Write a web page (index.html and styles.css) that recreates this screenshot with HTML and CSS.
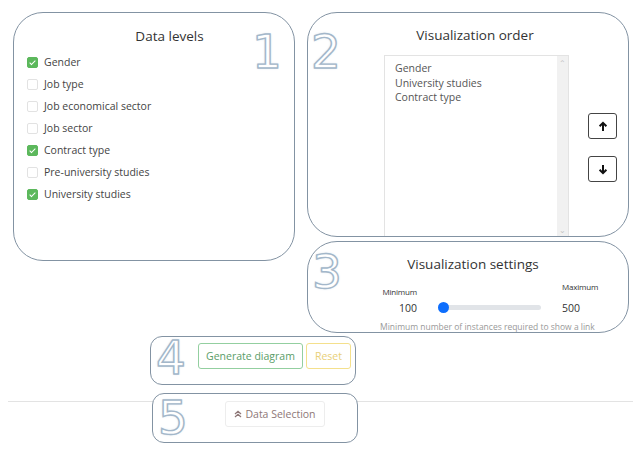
FILE: index.html
```html
<!DOCTYPE html>
<html lang="en">
<head>
    <meta charset="UTF-8">
    <meta name="viewport" content="width=device-width, initial-scale=1.0">
    <title>Data Selection</title>
    <link rel="stylesheet" href="styles.css">
</head>
<body>
    <div class="page">
        <div class="top-row">
            <div class="panel levels">
                <span class="step step-1">1</span>
                <h3 class="panel-title">Data levels</h3>
                <ul class="level-list">
                    <li><span class="check on"></span>Gender</li>
                    <li><span class="check"></span>Job type</li>
                    <li><span class="check"></span>Job economical sector</li>
                    <li><span class="check"></span>Job sector</li>
                    <li><span class="check on"></span>Contract type</li>
                    <li><span class="check"></span>Pre-university studies</li>
                    <li><span class="check on"></span>University studies</li>
                </ul>
            </div>

            <div class="right-col">
                <div class="panel order">
                    <span class="step step-2">2</span>
                    <h3 class="panel-title">Visualization order</h3>
                    <div class="order-body">
                        <div class="listbox">
                            <div class="list-items">
                                <div>Gender</div>
                                <div>University studies</div>
                                <div>Contract type</div>
                            </div>
                            <div class="scroll">
                                <span class="scroll-arrow">&#8963;</span>
                                <span class="scroll-arrow down">&#8964;</span>
                            </div>
                        </div>
                        <div class="move-buttons">
                            <button class="move-btn" title="Up">
                                <svg width="10" height="11" viewBox="0 0 10 11"><path d="M5 10V2M1.6 5.2L5 1.8 8.4 5.2" fill="none" stroke="#111" stroke-width="2"/></svg>
                            </button>
                            <button class="move-btn" title="Down">
                                <svg width="10" height="11" viewBox="0 0 10 11"><path d="M5 1v8M1.6 5.8L5 9.2 8.4 5.8" fill="none" stroke="#111" stroke-width="2"/></svg>
                            </button>
                        </div>
                    </div>
                </div>

                <div class="panel settings">
                    <span class="step step-3">3</span>
                    <h3 class="panel-title">Visualization settings</h3>
                    <div class="range-row">
                        <div class="range-min">
                            <div class="range-label">Minimum</div>
                            <div class="range-value">100</div>
                        </div>
                        <div class="slider">
                            <span class="thumb"></span>
                        </div>
                        <div class="range-max">
                            <div class="range-label">Maximum</div>
                            <div class="range-value">500</div>
                        </div>
                    </div>
                    <p class="hint">Minimum number of instances required to show a link</p>
                </div>
            </div>
        </div>

        <div class="panel actions">
            <span class="step step-4">4</span>
            <button class="btn btn-green">Generate diagram</button>
            <button class="btn btn-yellow">Reset</button>
        </div>

        <hr class="divider">

        <div class="panel selection">
            <span class="step step-5">5</span>
            <button class="btn btn-light">
                <svg width="8" height="8" viewBox="0 0 8 8"><path d="M1 4L4 1.3 7 4M1 7L4 4.3 7 7" fill="none" stroke="#8e7777" stroke-width="1.3"/></svg>
                Data Selection
            </button>
        </div>
    </div>
</body>
</html>
```

FILE: styles.css
```css
* {
    margin: 0;
    padding: 0;
    box-sizing: border-box;
}

body {
    font-family: 'Open Sans', 'Noto Sans', sans-serif;
    background: white;
    color: #444;
}

.page {
    padding: 12px 0 0 13px;
}

.top-row {
    display: flex;
    gap: 12px;
    align-items: flex-start;
}

.panel {
    position: relative;
    background: white;
    border: 1px solid #8393a3;
    border-radius: 30px;
}

.panel-title {
    font-size: 13.5px;
    font-weight: 400;
    line-height: 18px;
    color: #333;
    text-align: center;
}

/* outlined step numbers */
.step {
    position: absolute;
    font-family: 'DejaVu Sans', sans-serif;
    font-size: 47px;
    line-height: 1;
    color: white;
    -webkit-text-stroke: 1.4px #a3b7ca;
    text-shadow: 0 0 1px #8fa5ba, 0 0 3px #d3dee8;
}

.step-1 { top: 15px; right: 12px; }
.step-2 { top: 15px; left: 3px; }
.step-3 { top: 6px; left: 4px; }
.step-4 { top: -3px; left: 5px; }
.step-5 { top: 0; left: 5px; }

/* panel 1 */
.levels {
    width: 282px;
    height: 249px;
    padding: 14px 13px 0 13px;
}

.levels .panel-title {
    padding-left: 31px;
}

.level-list {
    list-style: none;
    margin-top: 6px;
}

.level-list li {
    display: flex;
    align-items: center;
    height: 22px;
    font-size: 10.5px;
    color: #444;
}

.check {
    width: 11px;
    height: 11px;
    border: 1px solid #e2e2e2;
    border-radius: 2px;
    margin-right: 6px;
    position: relative;
}

.check.on {
    background: #5cb85c;
    border-color: #5cb85c;
}

.check.on::after {
    content: '';
    position: absolute;
    left: 3px;
    top: 1px;
    width: 2px;
    height: 5px;
    border: solid white;
    border-width: 0 1.5px 1.5px 0;
    transform: rotate(45deg);
}

/* right column */
.right-col {
    width: 322px;
    display: flex;
    flex-direction: column;
    gap: 4px;
}

.order {
    height: 225px;
    padding-top: 13px;
    overflow: hidden;
}

.order .panel-title {
    padding-left: 14px;
}

.order-body {
    display: flex;
    justify-content: flex-end;
    align-items: center;
    gap: 19px;
    padding-right: 11px;
    margin-top: 11px;
}

.listbox {
    width: 185px;
    height: 183px;
    border: 1px solid #e3e3e3;
    display: flex;
    font-size: 10.5px;
    color: #555;
    line-height: 14.5px;
}

.list-items {
    flex: 1;
    padding: 5px 10px;
}

.scroll {
    width: 11px;
    background: #f1f1f1;
    display: flex;
    flex-direction: column;
    justify-content: space-between;
    align-items: center;
    color: #c4c4c4;
    font-size: 8px;
    line-height: 10px;
    padding: 2px 0;
}

.move-buttons {
    display: flex;
    flex-direction: column;
    gap: 17px;
    margin-top: 2px;
}

.move-btn {
    width: 29px;
    height: 26px;
    background: white;
    border: 1px solid #444;
    border-radius: 3px;
    display: flex;
    align-items: center;
    justify-content: center;
}

.settings {
    height: 92px;
    padding-top: 13px;
}

.settings .panel-title {
    padding-left: 10px;
}

.range-row {
    display: flex;
    align-items: flex-end;
    padding-left: 71px;
    margin-top: 8px;
}

.range-min {
    width: 38px;
    text-align: right;
}

.range-max {
    margin-left: 21px;
}

.range-label {
    font-size: 8px;
    color: #333;
    line-height: 12px;
    letter-spacing: -0.2px;
}

.range-value {
    font-size: 10.5px;
    line-height: 16px;
    color: #333;
    margin-top: 2px;
}

.range-max .range-value {
    margin-top: 7px;
}

.slider {
    width: 101px;
    height: 5px;
    margin-left: 23px;
    margin-bottom: 6px;
    background: #e1e4e8;
    border-radius: 3px;
    position: relative;
}

.thumb {
    position: absolute;
    left: -2px;
    top: -3px;
    width: 11px;
    height: 11px;
    border-radius: 50%;
    background: #0d6efd;
}

.hint {
    font-size: 8.5px;
    color: #999;
    margin-top: 5px;
    padding-left: 72px;
}

/* actions */
.actions {
    width: 206px;
    height: 49px;
    margin: 3px 0 0 137px;
    padding: 6px 0 0 47px;
    display: flex;
    align-items: flex-start;
    gap: 3px;
    border-radius: 12px;
}

.btn {
    font-family: inherit;
    font-size: 10.5px;
    background: white;
    border-radius: 3px;
    height: 26px;
}

.btn-green {
    width: 105px;
    border: 1px solid #93cfa0;
    color: #5a9d68;
}

.btn-yellow {
    width: 45px;
    border: 1px solid #f4e08c;
    color: #e9d078;
}

.divider {
    border: none;
    border-top: 1px solid #e3e3e3;
    margin: 16px 8px 0 -5px;
}

.selection {
    width: 206px;
    height: 50px;
    margin: -9px 0 0 139px;
    padding: 7px 0 0 72px;
    border-radius: 12px;
}

.btn-light {
    width: 100px;
    border: 1px solid #ededed;
    color: #8e7777;
    display: flex;
    align-items: center;
    justify-content: center;
    gap: 3px;
}
```
